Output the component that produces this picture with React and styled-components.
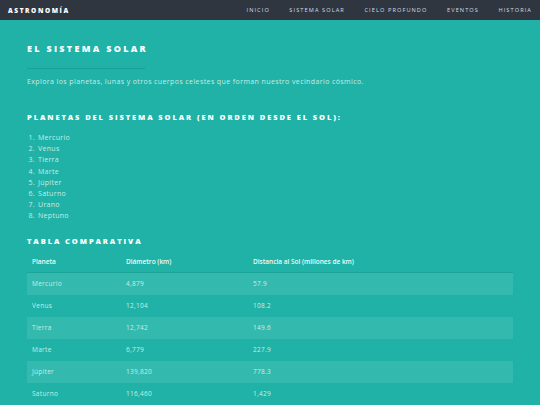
import React from 'react'
import styled, { createGlobalStyle } from 'styled-components'

const Global = createGlobalStyle`
  * { box-sizing: border-box; }
  body {
    margin: 0;
    background: #20b2a6;
    font-family: "Open Sans", "Liberation Sans", sans-serif;
  }
`

const Nav = styled.nav`
  height: 20px;
  background: #2f3640;
  display: flex;
  align-items: center;
  justify-content: space-between;
  padding: 0 8px 0 8px;
`

const Brand = styled.div`
  color: #ffffff;
  font-size: 6.5px;
  font-weight: 800;
  letter-spacing: 1.6px;
`

const Links = styled.ul`
  list-style: none;
  margin: 0;
  padding: 0;
  display: flex;
  gap: 19.5px;
`

const Link = styled.li`
  color: #d8dde2;
  font-size: 5.6px;
  letter-spacing: 1.1px;
`

const Main = styled.main`
  padding: 22px 27px 0;
`

const Title = styled.h1`
  margin: 0;
  color: #ffffff;
  font-size: 9px;
  font-weight: 800;
  letter-spacing: 2.3px;
  padding-bottom: 13px;
  width: 118px;
  border-bottom: 1px solid #1ba096;
  white-space: nowrap;
`

const Intro = styled.p`
  margin: 8px 0 0;
  color: #c9ece7;
  font-size: 7px;
  letter-spacing: 0.4px;
`

const Heading = styled.h2`
  margin: ${p => p.$top}px 0 0;
  color: #ffffff;
  font-size: 7.5px;
  font-weight: 800;
  letter-spacing: 1.9px;
`

const List = styled.ol`
  margin: 10px 0 0;
  padding: 0 0 0 10px;
  color: #c9ece7;
  font-size: 7px;
  line-height: 11.2px;
  letter-spacing: 0.3px;

  li {
    padding-left: 1px;
  }
`

const Table = styled.table`
  margin-top: 6px;
  width: 486px;
  border-collapse: collapse;
  font-size: 6.5px;
`

const Th = styled.th`
  text-align: left;
  color: #eefaf8;
  font-weight: 600;
  height: 21px;
  padding: 0 5px;
  border-bottom: 1px solid #1ba49a;
  width: ${p => p.$w || 'auto'};
`

const Row = styled.tr`
  background: ${p => (p.$alt ? 'rgba(255,255,255,0.09)' : 'transparent')};
`

const Td = styled.td`
  color: #c9ece7;
  height: 22px;
  padding: 0 5px;
  letter-spacing: 0.3px;
`

const planets = ['Mercurio', 'Venus', 'Tierra', 'Marte', 'Júpiter', 'Saturno', 'Urano', 'Neptuno']

const rows = [
  ['Mercurio', '4,879', '57.9'],
  ['Venus', '12,104', '108.2'],
  ['Tierra', '12,742', '149.6'],
  ['Marte', '6,779', '227.9'],
  ['Júpiter', '139,820', '778.3'],
  ['Saturno', '116,460', '1,429'],
  ['Urano', '50,724', '2,871'],
  ['Neptuno', '49,244', '4,498'],
]

const App = () => {
  return (
    <>
      <Global />
      <Nav>
        <Brand>ASTRONOMÍA</Brand>
        <Links>
          <Link>INICIO</Link>
          <Link>SISTEMA SOLAR</Link>
          <Link>CIELO PROFUNDO</Link>
          <Link>EVENTOS</Link>
          <Link>HISTORIA</Link>
        </Links>
      </Nav>
      <Main>
        <Title>EL SISTEMA SOLAR</Title>
        <Intro>Explora los planetas, lunas y otros cuerpos celestes que forman nuestro vecindario cósmico.</Intro>
        <Heading $top={26}>PLANETAS DEL SISTEMA SOLAR (EN ORDEN DESDE EL SOL):</Heading>
        <List>
          {planets.map(p => <li key={p}>{p}</li>)}
        </List>
        <Heading $top={14}>TABLA COMPARATIVA</Heading>
        <Table>
          <thead>
            <tr>
              <Th $w="94px">Planeta</Th>
              <Th $w="127px">Diámetro (km)</Th>
              <Th>Distancia al Sol (millones de km)</Th>
            </tr>
          </thead>
          <tbody>
            {rows.map((r, i) => (
              <Row key={r[0]} $alt={i % 2 === 0}>
                <Td>{r[0]}</Td>
                <Td>{r[1]}</Td>
                <Td>{r[2]}</Td>
              </Row>
            ))}
          </tbody>
        </Table>
      </Main>
    </>
  )
}

export default App
